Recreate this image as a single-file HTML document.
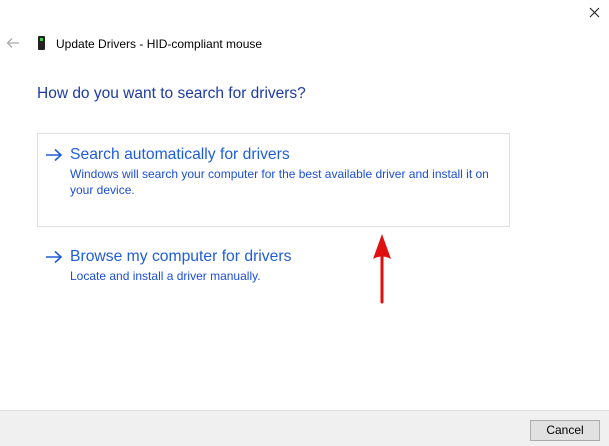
<!DOCTYPE html>
<html><head><style>
body{margin:0;width:609px;height:445px;background:#fff;font-family:"Liberation Sans",sans-serif;position:relative;overflow:hidden}
.a{position:absolute}
.t{font-size:12px;color:#000}
.h{font-size:15.5px;color:#1d3aa5}
.tt{font-size:15.7px;color:#1f5ed9}
.d{font-size:12px;color:#1c4fd6;line-height:16px}
</style></head><body>
<svg class="a" style="left:589px;top:7px" width="11" height="11"><path d="M1 1 10 10M10 1 1 10" stroke="#222" stroke-width="1.1"/></svg>
<svg class="a" style="left:6px;top:37px" width="14" height="12"><path d="M13 6H2M6 1.5 1.5 6 6 10.5" stroke="#aaa" stroke-width="1.3" fill="none"/></svg>
<div class="a" style="left:38px;top:36px;width:7px;height:14px;background:#222;border-radius:1px"></div>
<div class="a" style="left:40px;top:38px;width:3px;height:3px;background:#4c4"></div>
<div class="a t" style="left:56px;top:37px">Update Drivers - HID-compliant mouse</div>
<div class="a h" style="left:37px;top:85px">How do you want to search for drivers?</div>
<div class="a" style="left:37px;top:133px;width:471px;height:92px;border:1px solid #e0e0e0"></div>
<svg class="a" style="left:45px;top:148px" width="18" height="14"><path d="M1 7H16M10 1.5 16 7 10 12.5" stroke="#1f5ed9" stroke-width="1.6" fill="none"/></svg>
<div class="a tt" style="left:70px;top:146px">Search automatically for drivers</div>
<div class="a d" style="left:70px;top:166px">Windows will search your computer for the best available driver and install it on<br>your device.</div>
<svg class="a" style="left:45px;top:250px" width="18" height="14"><path d="M1 7H16M10 1.5 16 7 10 12.5" stroke="#1f5ed9" stroke-width="1.6" fill="none"/></svg>
<div class="a tt" style="left:70px;top:248px">Browse my computer for drivers</div>
<div class="a d" style="left:70px;top:268px">Locate and install a driver manually.</div>
<svg class="a" style="left:370px;top:232px" width="26" height="74"><path d="M12 2 3 27 Q12 22 21 27Z" fill="#e01010"/><path d="M12 22V70" stroke="#e01010" stroke-width="3" stroke-linecap="round"/></svg>
<div class="a" style="left:0;top:410px;width:609px;height:35px;background:#f0f0f0;border-top:1px solid #dfdfdf"></div>
<div class="a" style="left:530px;top:420px;width:68px;height:19px;border:1px solid #adadad;background:#e1e1e1;font-size:12px;text-align:center;line-height:19px">Cancel</div>
</body></html>
